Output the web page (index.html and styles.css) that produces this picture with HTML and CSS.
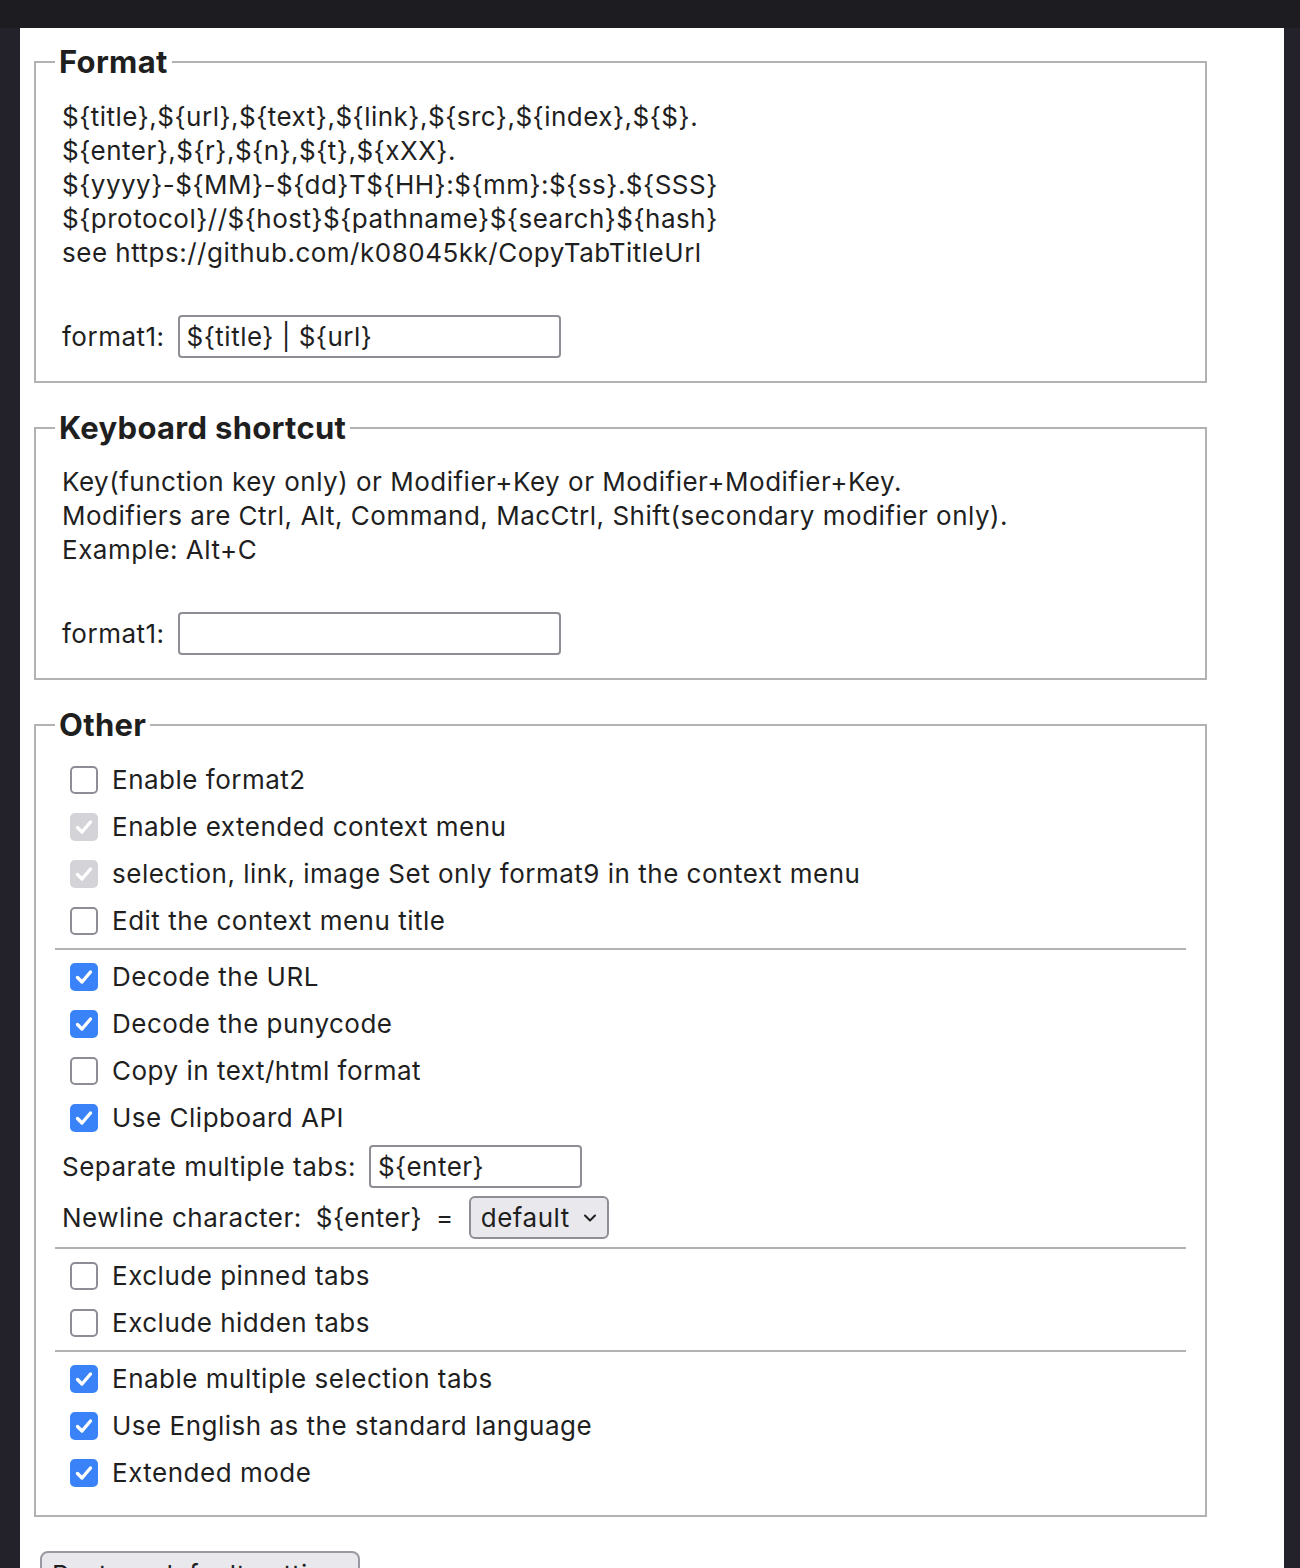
FILE: index.html
```html
<!DOCTYPE html>
<html lang="en">
<head>
<meta charset="utf-8">
<title>Options</title>
<link rel="stylesheet" href="styles.css">
</head>
<body>
<div class="topbar"></div>
<div class="panel">
  <fieldset class="group">
    <legend>Format</legend>
    <div class="desc">
      ${title},${url},${text},${link},${src},${index},${$}.<br>
      ${enter},${r},${n},${t},${xXX}.<br>
      ${yyyy}-${MM}-${dd}T${HH}:${mm}:${ss}.${SSS}<br>
      ${protocol}//${host}${pathname}${search}${hash}<br>
      see https://github.com/k08045kk/CopyTabTitleUrl
    </div>
    <div class="field-row">
      <label class="field-label" for="format1">format1:</label>
      <input class="text-input wide" id="format1" type="text" value="${title} | ${url}">
    </div>
  </fieldset>

  <fieldset class="group">
    <legend>Keyboard shortcut</legend>
    <div class="desc">
      Key(function key only) or Modifier+Key or Modifier+Modifier+Key.<br>
      Modifiers are Ctrl, Alt, Command, MacCtrl, Shift(secondary modifier only).<br>
      Example: Alt+C
    </div>
    <div class="field-row">
      <label class="field-label" for="shortcut1">format1:</label>
      <input class="text-input wide" id="shortcut1" type="text" value="">
    </div>
  </fieldset>

  <fieldset class="group other">
    <legend>Other</legend>
    <label class="check-row"><input type="checkbox"><span>Enable format2</span></label>
    <label class="check-row"><input type="checkbox" checked disabled><span>Enable extended context menu</span></label>
    <label class="check-row"><input type="checkbox" checked disabled><span>selection, link, image Set only format9 in the context menu</span></label>
    <label class="check-row"><input type="checkbox"><span>Edit the context menu title</span></label>
    <hr class="sep">
    <label class="check-row"><input type="checkbox" checked><span>Decode the URL</span></label>
    <label class="check-row"><input type="checkbox" checked><span>Decode the punycode</span></label>
    <label class="check-row"><input type="checkbox"><span>Copy in text/html format</span></label>
    <label class="check-row"><input type="checkbox" checked><span>Use Clipboard API</span></label>
    <div class="opt-row">
      <label class="field-label" for="sep">Separate multiple tabs:</label>
      <input class="text-input short" id="sep" type="text" value="${enter}">
    </div>
    <div class="opt-row gapped">
      <span>Newline character:</span>
      <span>${enter}</span>
      <span>=</span>
      <select class="select">
        <option>default</option>
      </select>
    </div>
    <hr class="sep">
    <label class="check-row"><input type="checkbox"><span>Exclude pinned tabs</span></label>
    <label class="check-row"><input type="checkbox"><span>Exclude hidden tabs</span></label>
    <hr class="sep">
    <label class="check-row"><input type="checkbox" checked><span>Enable multiple selection tabs</span></label>
    <label class="check-row"><input type="checkbox" checked><span>Use English as the standard language</span></label>
    <label class="check-row"><input type="checkbox" checked><span>Extended mode</span></label>
  </fieldset>

  <div class="actions">
    <button class="button" type="button">Restore default settings</button>
  </div>
</div>
</body>
</html>
```

FILE: styles.css
```css
html, body {
  margin: 0;
  padding: 0;
}

body {
  background: #23222a;
  font-family: Inter, "Noto Sans", "Liberation Sans", sans-serif;
  font-size: 26px;
  letter-spacing: 0.5px;
  color: #1f1f1f;
  height: 1568px;
  overflow: hidden;
}

.topbar {
  height: 28px;
  background: #1c1c21;
}

.panel {
  background: #ffffff;
  margin: 0 16px 0 20px;
  padding: 15px 0 0 14px;
  height: 1540px;
  box-sizing: border-box;
}

.group {
  width: 1173px;
  box-sizing: border-box;
  margin: 0 0 26px 0;
  padding: 12px 19px 19px 19px;
  border: 2px solid #b2b2b2;
  min-inline-size: 0;
}

.group legend {
  font-size: 31px;
  font-weight: 700;
  line-height: 38px;
  letter-spacing: 0.3px;
  padding: 0 4px;
  color: #1f1f1f;
}

.desc {
  margin: 6.5px 0 41px 0;
  padding-left: 7px;
  line-height: 34px;
}

.field-row,
.opt-row {
  display: flex;
  align-items: center;
  height: 51px;
  padding-left: 7px;
}

.field-label {
  margin-right: 13px;
}

.gapped {
  gap: 14px;
}

.text-input {
  font: inherit;
  letter-spacing: inherit;
  color: #1f1f1f;
  height: 43px;
  box-sizing: border-box;
  border: 2px solid #8f8e96;
  border-radius: 4px;
  padding: 0 7px;
  background: #fff;
  outline: none;
}

.text-input.wide {
  width: 383px;
}

.text-input.short {
  width: 213px;
}

.select {
  appearance: none;
  -webkit-appearance: none;
  font: inherit;
  letter-spacing: inherit;
  color: #1f1f1f;
  height: 43px;
  width: 140px;
  box-sizing: border-box;
  border: 2px solid #8f8e96;
  border-radius: 6px;
  background-color: #e9e9ed;
  background-image: url("data:image/svg+xml;utf8,<svg xmlns='http://www.w3.org/2000/svg' width='14' height='10' viewBox='0 0 14 10'><path d='M2 2.5 L7 7.5 L12 2.5' fill='none' stroke='%231f1f1f' stroke-width='2' stroke-linecap='round' stroke-linejoin='round'/></svg>");
  background-repeat: no-repeat;
  background-position: right 10px center;
  padding: 0 0 0 10px;
  margin-left: 1px;
}

.check-row {
  display: flex;
  align-items: center;
  height: 47px;
}

.check-row input {
  appearance: none;
  -webkit-appearance: none;
  width: 28px;
  height: 28px;
  box-sizing: border-box;
  margin: 0 14px 0 15px;
  border: 2.5px solid #8e8d96;
  border-radius: 5px;
  background: #fff;
  flex: none;
}

.check-row input:checked {
  border: none;
  background-color: #3a82f7;
  background-image: url("data:image/svg+xml;utf8,<svg xmlns='http://www.w3.org/2000/svg' width='28' height='28' viewBox='0 0 28 28'><path d='M7.5 14.5 L12 19 L20.5 9' fill='none' stroke='white' stroke-width='3.4' stroke-linecap='round' stroke-linejoin='round'/></svg>");
  background-repeat: no-repeat;
  background-position: center;
}

.check-row input:checked:disabled {
  background-color: #d3d3d8;
}

.sep {
  border: none;
  height: 2px;
  background: #b2b2b2;
  margin: 3.5px 0;
}

.actions {
  padding: 8px 0 0 6px;
}

.button {
  font: inherit;
  letter-spacing: inherit;
  color: #1f1f1f;
  height: 46px;
  width: 320px;
  box-sizing: border-box;
  border: 2px solid #9a99a1;
  border-radius: 8px;
  background: #e9e9ed;
  padding: 0 10px;
  white-space: nowrap;
}
```
